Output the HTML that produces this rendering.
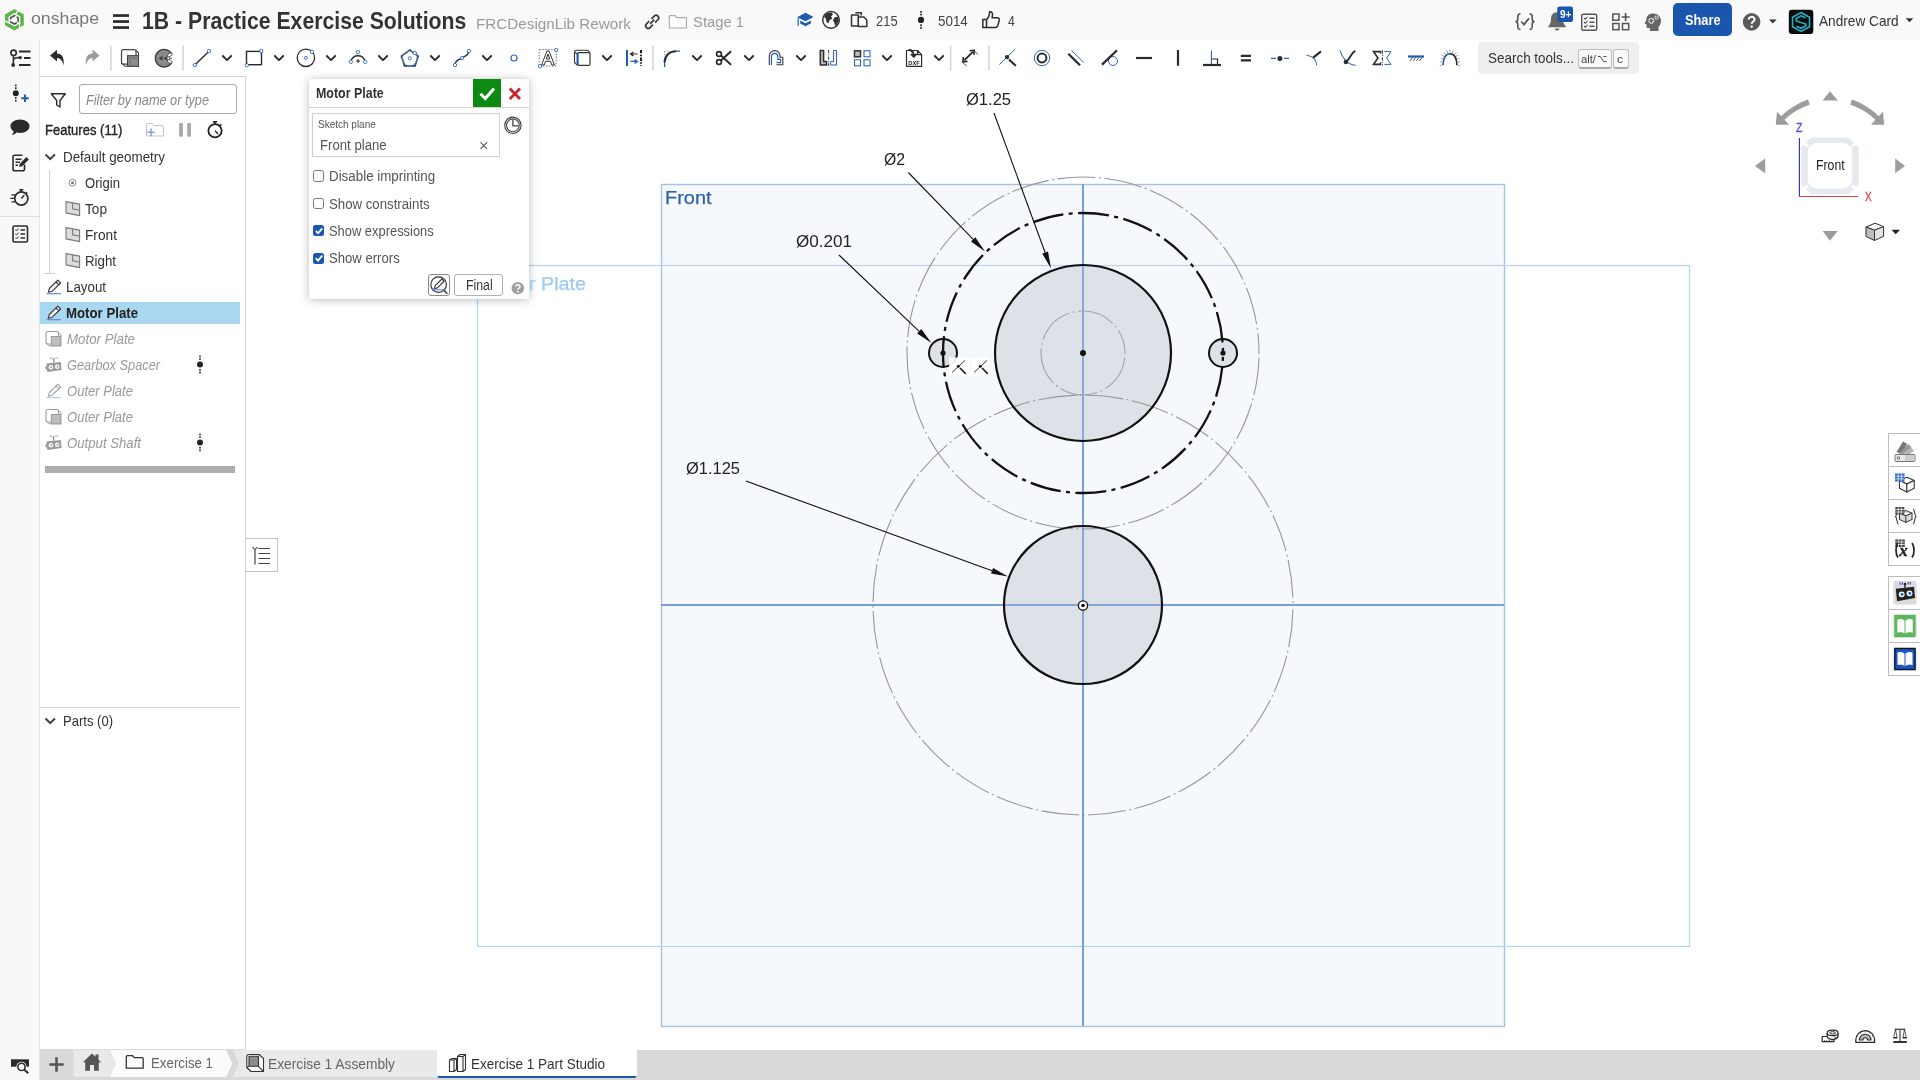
<!DOCTYPE html>
<html>
<head>
<meta charset="utf-8">
<title>1B - Practice Exercise Solutions</title>
<style>
html,body{margin:0;padding:0;}
body{width:1920px;height:1080px;overflow:hidden;position:relative;background:#fff;font-family:"Liberation Sans",sans-serif;}
.a{position:absolute;box-sizing:border-box;}
.t{position:absolute;white-space:pre;transform-origin:0 50%;font-family:"Liberation Sans",sans-serif;}
svg{position:absolute;overflow:visible;}
</style>
</head>
<body>
<!-- chrome backgrounds -->
<div class="a" style="left:0;top:0;width:1920px;height:40px;background:#f9f9f9;"></div>
<div class="a" style="left:0;top:40px;width:40px;height:1040px;background:#f8f8f8;border-right:1px solid #e4e4e4;"></div>
<div class="a" style="left:40px;top:76px;width:206px;height:1px;background:#d0d0d0;"></div>
<div class="a" style="left:0;top:216px;width:40px;height:1px;background:#dcdcdc;"></div>
<!-- feature panel -->
<div class="a" style="left:40px;top:77px;width:206px;height:973px;background:#fff;border-right:1px solid #d6d6d6;border-bottom:1px solid #dcdcdc;"></div>
<div class="a" style="left:79px;top:84px;width:158px;height:30px;border:1px solid #aaa;border-radius:3px;background:#fff;"></div>
<div class="a" style="left:40px;top:301.6px;width:200px;height:22.8px;background:#a9d7f2;"></div>
<div class="a" style="left:45px;top:466px;width:190px;height:7px;background:#adadad;"></div>
<div class="a" style="left:40px;top:707px;width:200px;height:1px;background:#d4d4d4;"></div>
<div class="a" style="left:49px;top:170px;width:1px;height:103px;background:#d0d0d0;"></div>
<div class="a" style="left:44px;top:273px;width:11px;height:1px;background:#d0d0d0;"></div>
<!-- panel toggle tab -->
<div class="a" style="left:246px;top:538px;width:32px;height:34px;background:#fff;border:1px solid #c4c4c4;border-left:none;"></div>
<!-- bottom bar -->
<div class="a" style="left:40px;top:1050px;width:1880px;height:30px;background:#d9d9d9;"></div>
<!-- search tools -->
<div class="a" style="left:1478px;top:42px;width:161px;height:32px;background:#efefef;border-radius:4px;"></div>
<div class="a" style="left:1578px;top:49px;width:34px;height:20px;border:1px solid #bdbdbd;border-bottom:2px solid #a9a9a9;border-radius:3px;background:#f8f8f8;"></div>
<div class="a" style="left:1612.5px;top:49px;width:16.5px;height:20px;border:1px solid #bdbdbd;border-bottom:2px solid #a9a9a9;border-radius:3px;background:#f8f8f8;"></div>
<!-- share -->
<div class="a" style="left:1672.8px;top:3px;width:59.2px;height:32.7px;background:#1a56ad;border-radius:5px;"></div>
<!-- sketch canvas -->
<svg width="1920" height="1080" viewBox="0 0 1920 1080" style="left:0;top:0;">
  <!-- Front plane -->
  <rect x="661.5" y="184.5" width="843" height="842" fill="#f6f9fb" stroke="#a6c1e8" stroke-width="1.4"/>
  <!-- Motor Plate plane -->
  <rect x="477.5" y="265.5" width="1212" height="681" fill="none" stroke="#b3d3ee" stroke-width="1.2"/>
  <!-- axes -->
  <line x1="1083" y1="184" x2="1083" y2="1026" stroke="#7a9fd6" stroke-width="2"/>
  <line x1="661" y1="605" x2="1504" y2="605" stroke="#7a9fd6" stroke-width="2"/>
  <!-- filled regions -->
  <circle cx="1083" cy="353" r="88" fill="#dde1e8"/>
  <circle cx="1083" cy="605" r="79" fill="#dde1e8"/>
  <circle cx="943" cy="353" r="14" fill="#dde1e8"/>
  <circle cx="1223" cy="353" r="14" fill="#dde1e8"/>
  <!-- axes over the fill, lighter -->
  <line x1="1083" y1="265" x2="1083" y2="441" stroke="#7a9fd6" stroke-width="2" opacity="0.85"/>
  <line x1="1083" y1="526" x2="1083" y2="684" stroke="#7a9fd6" stroke-width="2" opacity="0.85"/>
  <line x1="1004" y1="605" x2="1162" y2="605" stroke="#7a9fd6" stroke-width="2" opacity="0.85"/>
  <!-- thin construction circles -->
  <circle cx="1083" cy="353" r="176" fill="none" stroke="#979797" stroke-width="1.1" stroke-dasharray="38 3.5 2 3.5" stroke-dashoffset="42.5"/>
  <circle cx="1083" cy="353" r="42" fill="none" stroke="#a4a4a4" stroke-width="1.1" stroke-dasharray="38 3.5 2 3.5" stroke-dashoffset="42.5"/>
  <circle cx="1083" cy="605" r="210" fill="none" stroke="#979797" stroke-width="1.1" stroke-dasharray="38 3.5 2 3.5" stroke-dashoffset="42.5"/>
  <!-- bold construction circle -->
  <circle cx="1083" cy="353" r="140" fill="none" stroke="#111" stroke-width="2.3" stroke-dasharray="31 5.4 4 5.4" stroke-dashoffset="32.5"/>
  <!-- solid circles -->
  <circle cx="1083" cy="353" r="88" fill="none" stroke="#111" stroke-width="2.2"/>
  <circle cx="1083" cy="605" r="79" fill="none" stroke="#111" stroke-width="2.2"/>
  <circle cx="943" cy="353" r="14" fill="none" stroke="#111" stroke-width="2"/>
  <circle cx="1223" cy="353" r="14" fill="none" stroke="#111" stroke-width="2"/>
  <!-- points -->
  <circle cx="1083" cy="353" r="3" fill="#111"/>
  <circle cx="943" cy="353" r="2.6" fill="#111"/>
  <circle cx="1223" cy="353" r="2.6" fill="#111"/>
  <!-- origin -->
  <circle cx="1083" cy="605.5" r="4.6" fill="#fff" stroke="#111" stroke-width="1.3"/>
  <circle cx="1083" cy="605.5" r="1.8" fill="#111"/>
  <!-- leaders -->
  <line x1="994" y1="113" x2="1045.1" y2="252.5" stroke="#111" stroke-width="1.1"/><polygon points="1051.0,268.5 1042.3,253.6 1048.0,251.5" fill="#111"/>
  <line x1="908.3" y1="172.5" x2="973.2" y2="239.3" stroke="#111" stroke-width="1.1"/><polygon points="985.0,251.5 971.0,241.4 975.3,237.2" fill="#111"/>
  <line x1="839" y1="255" x2="919.2" y2="331.3" stroke="#111" stroke-width="1.1"/><polygon points="931.5,343.0 917.1,333.5 921.3,329.1" fill="#111"/>
  <line x1="746" y1="481" x2="992.0" y2="570.7" stroke="#111" stroke-width="1.1"/><polygon points="1008.0,576.5 991.0,573.5 993.1,567.9" fill="#111"/>
  <!-- constraint glyphs -->
  <rect x="949" y="357.5" width="20" height="18" fill="#fff" opacity="0.92"/>
  <rect x="971.5" y="357.5" width="18" height="18" fill="#fff" opacity="0.92"/>
  <g fill="none" stroke="#222">
    <path d="M952,372.5 L965,360.4" stroke-width="0.9"/>
    <path d="M960,368 L965.8,373.8" stroke-width="1.7"/>
    <path d="M974,372.5 L987,360.4" stroke-width="0.9"/>
    <path d="M982,368 L987.8,373.8" stroke-width="1.7"/>
  </g>
  <circle cx="958.3" cy="366.3" r="1.5" fill="#222"/>
  <circle cx="980.3" cy="366.3" r="1.5" fill="#222"/>
</svg>
<!-- dialog -->
<div class="a" style="left:309px;top:79.3px;width:220px;height:219.6px;background:#fff;box-shadow:0 1px 9px rgba(0,0,0,0.25),0 0 1px rgba(0,0,0,0.15);"></div>
<div class="a" style="left:309px;top:107px;width:220px;height:1px;background:#d4d4d4;"></div>
<div class="a" style="left:473px;top:79.3px;width:28.2px;height:27.7px;background:#0c8a12;"></div>
<div class="a" style="left:312px;top:113px;width:188px;height:44px;border:1px solid #cfcfcf;background:#fff;"></div>
<div class="a" style="left:313.3px;top:170.4px;width:11.2px;height:11.2px;border:1px solid #767676;border-radius:2.5px;background:#fff;"></div>
<div class="a" style="left:313.3px;top:197.5px;width:11.2px;height:11.2px;border:1px solid #767676;border-radius:2.5px;background:#fff;"></div>
<div class="a" style="left:313.3px;top:225.2px;width:11.2px;height:11.2px;border-radius:2.5px;background:#1a56ad;"></div>
<div class="a" style="left:313.3px;top:252.6px;width:11.2px;height:11.2px;border-radius:2.5px;background:#1a56ad;"></div>
<div class="a" style="left:428.2px;top:274.4px;width:21.8px;height:21.2px;border:1px solid #8a8a8a;border-radius:3px;background:#fff;"></div>
<div class="a" style="left:454px;top:274.4px;width:48.7px;height:21.2px;border:1px solid #b0b0b0;border-radius:3px;background:#fff;"></div>
<!-- right side panel -->
<div class="a" style="left:1888px;top:433px;width:33px;height:133px;border:1px solid #bdbdbd;background:#fff;"></div>
<div class="a" style="left:1888px;top:466px;width:33px;height:1px;background:#bdbdbd;"></div>
<div class="a" style="left:1888px;top:499px;width:33px;height:1px;background:#bdbdbd;"></div>
<div class="a" style="left:1888px;top:532px;width:33px;height:1px;background:#bdbdbd;"></div>
<div class="a" style="left:1888px;top:576px;width:33px;height:100px;border:1px solid #bdbdbd;background:#fff;"></div>
<div class="a" style="left:1888px;top:609px;width:33px;height:1px;background:#bdbdbd;"></div>
<div class="a" style="left:1888px;top:642px;width:33px;height:1px;background:#bdbdbd;"></div>
<!-- bottom tabs -->
<svg width="1920" height="1080" viewBox="0 0 1920 1080" style="left:0;top:0;">
  <path d="M73.5,1050 H109 L115,1063.5 L109,1077 H76.5 Q73.5,1077 73.5,1074 Z" fill="#e9e9e9"/>
  <path d="M109.5,1050 H226 L232.5,1063.5 L226,1077 H109.5 L115.5,1063.5 Z" fill="#fbfbfb"/>
  <path d="M232.8,1050 H437 V1077 H232.8 L238.8,1063.5 Z" fill="#e9e9e9"/>
  <path d="M437,1049.7 H637 V1075 Q637,1078 634,1078 H440 Q437,1078 437,1075 Z" fill="#fff"/>
  <path d="M437.5,1076 H636.5 V1076.3 Q636.5,1078 634.5,1078 H439.5 Q437.5,1078 437.5,1076.3 Z" fill="#1a56ad"/>
</svg>
<!-- ICONS -->
<svg width="1920" height="1080" viewBox="0 0 1920 1080" style="left:0;top:0;will-change:transform;">
<!-- ===== logo ===== -->
<g>
  <path d="M14.4,9 L23.8,14.4 L23.8,25.2 L14.4,30.6 L5,25.2 L5,14.4 Z" fill="#5cb548"/>
  <path d="M14.4,13 L20.3,16.4 L20.3,23.2 L14.4,26.6 L8.5,23.2 L8.5,16.4 Z" fill="#f8f8f8"/>
  <path d="M18.8,9.8 L15.4,14.3 M3.5,20.3 L9.5,23.2 M19.6,23 L19.6,29.5" stroke="#f8f8f8" stroke-width="1.3"/>
  <g fill="none" stroke="#484848" stroke-width="1.5" stroke-linejoin="miter">
    <path d="M10.7,19.4 V17.650 L14.4,15.5 L15.3,16"/>
    <path d="M16.6,16.8 L18.1,17.650 V22.2"/>
    <path d="M10.7,21.2 V21.950 L14.4,24.1 L16.8,22.7"/>
  </g>
</g>
<!-- hamburger -->
<g fill="#2a2a2a"><rect x="113" y="14.2" width="16" height="2.7"/><rect x="113" y="20.2" width="16" height="2.7"/><rect x="113" y="26.2" width="16" height="2.7"/></g>

<!-- ===== toolbar row ===== -->
<g stroke="#d0d0d0" stroke-width="1.4">
  <line x1="110.9" y1="45.5" x2="110.9" y2="70.5"/><line x1="183" y1="45.5" x2="183" y2="70.5"/>
  <line x1="653" y1="45.5" x2="653" y2="70.5"/><line x1="950.6" y1="45.5" x2="950.6" y2="70.5"/><line x1="989" y1="45.5" x2="989" y2="70.5"/>
</g>
<!-- chevrons -->
<path transform="translate(227,58)" d="M-4.2,-2 L0,2.1 L4.2,-2" fill="none" stroke="#2b2b2b" stroke-width="1.9" stroke-linecap="round" stroke-linejoin="round"/><path transform="translate(279,58)" d="M-4.2,-2 L0,2.1 L4.2,-2" fill="none" stroke="#2b2b2b" stroke-width="1.9" stroke-linecap="round" stroke-linejoin="round"/><path transform="translate(331,58)" d="M-4.2,-2 L0,2.1 L4.2,-2" fill="none" stroke="#2b2b2b" stroke-width="1.9" stroke-linecap="round" stroke-linejoin="round"/><path transform="translate(383,58)" d="M-4.2,-2 L0,2.1 L4.2,-2" fill="none" stroke="#2b2b2b" stroke-width="1.9" stroke-linecap="round" stroke-linejoin="round"/>
<path transform="translate(435,58)" d="M-4.2,-2 L0,2.1 L4.2,-2" fill="none" stroke="#2b2b2b" stroke-width="1.9" stroke-linecap="round" stroke-linejoin="round"/><path transform="translate(487,58)" d="M-4.2,-2 L0,2.1 L4.2,-2" fill="none" stroke="#2b2b2b" stroke-width="1.9" stroke-linecap="round" stroke-linejoin="round"/><path transform="translate(607,58)" d="M-4.2,-2 L0,2.1 L4.2,-2" fill="none" stroke="#2b2b2b" stroke-width="1.9" stroke-linecap="round" stroke-linejoin="round"/><path transform="translate(697,58)" d="M-4.2,-2 L0,2.1 L4.2,-2" fill="none" stroke="#2b2b2b" stroke-width="1.9" stroke-linecap="round" stroke-linejoin="round"/>
<path transform="translate(749,58)" d="M-4.2,-2 L0,2.1 L4.2,-2" fill="none" stroke="#2b2b2b" stroke-width="1.9" stroke-linecap="round" stroke-linejoin="round"/><path transform="translate(801,58)" d="M-4.2,-2 L0,2.1 L4.2,-2" fill="none" stroke="#2b2b2b" stroke-width="1.9" stroke-linecap="round" stroke-linejoin="round"/><path transform="translate(887,58)" d="M-4.2,-2 L0,2.1 L4.2,-2" fill="none" stroke="#2b2b2b" stroke-width="1.9" stroke-linecap="round" stroke-linejoin="round"/><path transform="translate(939,58)" d="M-4.2,-2 L0,2.1 L4.2,-2" fill="none" stroke="#2b2b2b" stroke-width="1.9" stroke-linecap="round" stroke-linejoin="round"/>
<!-- tree icon (left strip top) -->
<g stroke="#2b2b2b" fill="none" stroke-width="2">
  <circle cx="13.6" cy="52.8" r="2.7" stroke-width="1.6"/>
  <path d="M13.4,55.5 V63.5 M13.4,60 C13.4,57.5 16,58 19.5,57.6" stroke-width="1.6"/>
  <circle cx="13.2" cy="65" r="1.9" fill="#2b2b2b" stroke="none"/>
  <circle cx="20.2" cy="57.6" r="1.7" fill="#2b2b2b" stroke="none"/>
  <path d="M19,51.5 H30.5 M24,58 H30.5 M19,65 H30.5"/>
</g>
<!-- undo / redo -->
<path d="M50,55.5 L57,49.8 V53.4 C62,53.4 64.5,57.5 63.5,65.5 C62.5,60.5 60.5,58.2 57,58 V61.5 Z" fill="#2b2b2b"/>
<path d="M99.5,55.5 L92.5,49.8 V53.4 C87.5,53.4 85,57.5 86,65.5 C87,60.5 89,58.2 92.5,58 V61.5 Z" fill="#9c9c9c"/>
<!-- sketch/extrude box icon -->
<g>
  <rect x="121.5" y="49.7" width="14.5" height="14.5" rx="2" fill="#fff" stroke="#444" stroke-width="1.2"/>
  <path d="M136,50.5 L138.5,53 V66.3 H125 L122.3,63.6" fill="none" stroke="#444" stroke-width="1.1"/>
  <rect x="127.5" y="55.6" width="11" height="10.7" fill="#8c8c8c" stroke="#444" stroke-width="1"/>
  <path d="M127.5,55.6 L130,58 H138.5 M130,58 V66.3" stroke="#6a6a6a" stroke-width="1" fill="none"/>
</g>
<!-- pacman-like icon -->
<g transform="translate(164,58.2)">
  <path d="M7.7,-4.5 A8.8,8.8 0 1 0 7.7,4.5 L1,0 Z" fill="#8a8a8a" stroke="#3a3a3a" stroke-width="1.3" stroke-linejoin="round"/>
  <ellipse cx="5.8" cy="-3.3" rx="2.6" ry="1.5" transform="rotate(-35 5.8 -3.3)" fill="#fff" stroke="#3a3a3a" stroke-width="0.8"/>
  <ellipse cx="5.8" cy="3.3" rx="2.6" ry="1.5" transform="rotate(35 5.8 3.3)" fill="#fff" stroke="#3a3a3a" stroke-width="0.8"/>
  <path d="M-3.5,0 H8.5" stroke="#222" stroke-width="0.9" stroke-dasharray="3 1.2"/>
  <path d="M-4.5,0 L-1.5,-2 M-4.5,0 L-1.5,2" stroke="#222" stroke-width="0.9"/>
</g>
<!-- line tool -->
<line x1="195.8" y1="64" x2="208" y2="52.2" stroke="#2b2b2b" stroke-width="1.4"/>
<circle cx="194.8" cy="65" r="1.7" fill="#fff" stroke="#2e67b8" stroke-width="0.9"/><circle cx="209" cy="51.2" r="1.7" fill="#fff" stroke="#2e67b8" stroke-width="0.9"/>
<!-- rect tool -->
<rect x="246.5" y="51.4" width="15" height="13.3" fill="none" stroke="#2b2b2b" stroke-width="1.4"/>
<circle cx="261.3" cy="51" r="1.7" fill="#fff" stroke="#2e67b8" stroke-width="0.9"/><circle cx="246.8" cy="65.2" r="1.7" fill="#fff" stroke="#2e67b8" stroke-width="0.9"/>
<!-- circle tool -->
<circle cx="305.9" cy="57.8" r="8.7" fill="none" stroke="#2b2b2b" stroke-width="1.3"/>
<circle cx="305.9" cy="57.8" r="1.5" fill="#fff" stroke="#2e67b8" stroke-width="0.9"/><circle cx="312" cy="51.8" r="1.7" fill="#fff" stroke="#2e67b8" stroke-width="0.9"/>
<!-- arc tool -->
<path d="M351,61 A7.3,7.3 0 0 1 365,61" fill="none" stroke="#2b2b2b" stroke-width="1.3"/>
<path d="M356,61 H360 M358,59 V63" stroke="#2b2b2b" stroke-width="1"/>
<circle cx="350.8" cy="61.8" r="1.7" fill="#fff" stroke="#2e67b8" stroke-width="0.9"/><circle cx="365.2" cy="61.8" r="1.7" fill="#fff" stroke="#2e67b8" stroke-width="0.9"/><circle cx="358" cy="52.2" r="1.7" fill="#fff" stroke="#2e67b8" stroke-width="0.9"/>
<!-- polygon tool -->
<g transform="translate(409.8,58.8)">
  <path d="M0,-8.8 L8.4,-2.7 L5.2,7.1 L-5.2,7.1 L-8.4,-2.7 Z" fill="none" stroke="#27406e" stroke-width="1.7" stroke-linejoin="round"/>
  <circle cx="0" cy="-0.5" r="7.3" fill="none" stroke="#8fa6cf" stroke-width="0.7"/>
  <circle cx="0" cy="-0.5" r="1.6" fill="#fff" stroke="#2e67b8" stroke-width="0.9"/>
  <circle cx="5" cy="-5.8" r="1.7" fill="#fff" stroke="#2e67b8" stroke-width="0.9"/>
</g>
<!-- spline -->
<path d="M455,64.8 C456,58 460,60.5 462,58 C464,55.5 468,57 468.8,51.4" fill="none" stroke="#2b2b2b" stroke-width="1.3"/>
<circle cx="455" cy="65" r="1.7" fill="#fff" stroke="#2e67b8" stroke-width="0.9"/><circle cx="462" cy="58" r="1.6" fill="#fff" stroke="#2e67b8" stroke-width="0.9"/><circle cx="468.9" cy="51" r="1.7" fill="#fff" stroke="#2e67b8" stroke-width="0.9"/>
<!-- point -->
<circle cx="514" cy="58" r="3" fill="none" stroke="#2e67b8" stroke-width="1.2"/>
<!-- text tool -->
<rect x="539.2" y="49.6" width="17" height="16.4" fill="none" stroke="#555" stroke-width="0.8" stroke-dasharray="1.6 1.4"/>
<path d="M541.5,65 L547,51 H549 L554.5,65 H551.8 L550.5,61.3 H545.5 L544.2,65 Z M546.3,59 H549.7 L548,54 Z" fill="#fff" stroke="#333" stroke-width="1" stroke-linejoin="round"/>
<circle cx="556.2" cy="50" r="1.7" fill="#fff" stroke="#2e67b8" stroke-width="0.9"/><circle cx="540" cy="66.2" r="1.7" fill="#fff" stroke="#2e67b8" stroke-width="0.9"/>
<!-- use/project box -->
<path d="M574.5,52 L577.5,54 M574.5,52 Q574.5,50.3 576.5,50.3 H586.5 Q588.3,50.3 590,52.5 M574.5,52 V62.5 L577.5,65.3" fill="none" stroke="#333" stroke-width="1.1"/>
<rect x="577.5" y="52.6" width="12.5" height="12.8" rx="1.5" fill="#fff" stroke="#333" stroke-width="1.2"/>
<line x1="577.6" y1="53.5" x2="577.6" y2="64.8" stroke="#1f5bb0" stroke-width="2"/>
<!-- offset-dimension icon -->
<line x1="627" y1="50" x2="627" y2="66" stroke="#1f5bb0" stroke-width="2"/>
<line x1="641" y1="50" x2="641" y2="66" stroke="#222" stroke-width="2" stroke-dasharray="3.3 1.4 1.5 1.4"/>
<path d="M631,54 H637.5 M633.5,52 L630.5,54 L633.5,56" fill="none" stroke="#222" stroke-width="1.2"/>
<path d="M630.5,61.4 H637 M634.5,59.4 L637.5,61.4 L634.5,63.4" fill="none" stroke="#1f5bb0" stroke-width="1.2"/>
<!-- fillet -->
<path d="M664.5,51.3 H670 M664.5,51.3 V56" stroke="#888" stroke-width="0.8" stroke-dasharray="1.3 1.2" fill="none"/>
<path d="M664.6,62.5 C664.6,56 669,51.3 676,51.2" fill="none" stroke="#2b2b2b" stroke-width="2"/>
<path d="M664.6,62 V67 M675.5,51.2 H680" stroke="#1f5bb0" stroke-width="1.3"/>
<!-- trim scissors -->
<g stroke="#2b2b2b" fill="none" stroke-width="2" stroke-linecap="round">
  <path d="M721.5,56 L730.5,64.3 M721.5,60 L730.5,51.7"/>
  <circle cx="719" cy="54" r="2.4" stroke-width="1.7"/><circle cx="719" cy="62" r="2.4" stroke-width="1.7"/>
</g>
<!-- offset -->
<path d="M769.3,65 V56 A5.3,5.3 0 0 1 780,56 V57.2 H782.8 V64.8 H776.5" fill="none" stroke="#333" stroke-width="1.1"/>
<path d="M771.5,65 V56 A3.2,3.2 0 0 1 777.8,56 V59.4 H780.6 V62.6 H776.5" fill="none" stroke="#1f5bb0" stroke-width="1.1"/>
<!-- mirror -->
<path d="M820.3,50.5 H823.6 V61.6 H826.6 V65 H820.3 Z" fill="#bbb" stroke="#2b2b2b" stroke-width="1.5" stroke-linejoin="round"/>
<line x1="828.6" y1="50" x2="828.6" y2="66" stroke="#333" stroke-width="1" stroke-dasharray="3 1.3 1 1.3"/>
<path d="M836.6,50.5 H833.6 V61.6 H830.6 V65 H836.6 Z" fill="none" stroke="#1f5bb0" stroke-width="1"/>
<!-- pattern -->
<rect x="854.5" y="50.8" width="6" height="6" fill="#bbb" stroke="#333" stroke-width="1.5"/>
<rect x="864" y="50.8" width="6" height="6" fill="none" stroke="#1f5bb0" stroke-width="1"/>
<rect x="854.5" y="59.8" width="6" height="6" fill="none" stroke="#1f5bb0" stroke-width="1"/>
<rect x="864" y="59.8" width="6" height="6" fill="none" stroke="#1f5bb0" stroke-width="1"/>
<!-- DXF -->
<path d="M906.5,50.5 H917.5 L921.6,54.6 V66.3 H906.5 Z M917.5,50.5 V54.6 H921.6" fill="#fff" stroke="#2b2b2b" stroke-width="1.2" stroke-linejoin="round"/>
<path d="M908.5,49.6 C912,49.6 913.8,51.5 913.8,54.8 M911,54.3 L913.8,57.3 L916.6,54.3 Z" fill="#2b2b2b" stroke="#2b2b2b" stroke-width="1.2" stroke-linejoin="round"/>
<text x="914" y="65" font-family="Liberation Sans, sans-serif" font-size="5.8" font-weight="700" fill="#222" text-anchor="middle" textLength="11.5" lengthAdjust="spacingAndGlyphs">DXF</text>
<!-- dimension -->
<g stroke="#222" fill="none">
  <path d="M964.5,60.2 L972.8,51.9" stroke-width="1.8"/>
  <path d="M963.3,57.2 L963,61.8 L967.5,61.4 M969.7,50.7 L974.2,50.3 L973.9,54.9" stroke-width="1.6" stroke-linejoin="miter"/>
  <path d="M962,62 L966.5,66 M973.5,50.2 L977.8,54.5" stroke-width="0.8"/>
</g>
<!-- coincident -->
<line x1="999.4" y1="64.5" x2="1015" y2="49.3" stroke="#2e67b8" stroke-width="1"/>
<line x1="1009" y1="59.5" x2="1015.8" y2="65.8" stroke="#2b2b2b" stroke-width="2.2"/>
<circle cx="1007" cy="57.1" r="2.2" fill="#2b2b2b"/>
<!-- concentric -->
<circle cx="1042" cy="58" r="7.7" fill="none" stroke="#2e67b8" stroke-width="1"/><circle cx="1042" cy="58" r="4.4" fill="none" stroke="#2b2b2b" stroke-width="2"/>
<!-- parallel -->
<line x1="1068.3" y1="53.8" x2="1080" y2="65.3" stroke="#2b2b2b" stroke-width="2.2"/><line x1="1071.5" y1="50.5" x2="1083.7" y2="62.4" stroke="#2e67b8" stroke-width="1"/>
<!-- tangent -->
<circle cx="1113" cy="61" r="4.5" fill="none" stroke="#2e67b8" stroke-width="1"/><line x1="1102" y1="64.6" x2="1117" y2="50.2" stroke="#2b2b2b" stroke-width="2.2"/>
<!-- horizontal / vertical -->
<line x1="1136" y1="58" x2="1152" y2="58" stroke="#2b2b2b" stroke-width="2.2"/><line x1="1178" y1="50" x2="1178" y2="65.8" stroke="#2b2b2b" stroke-width="2.2"/>
<!-- perpendicular -->
<line x1="1211.4" y1="50.4" x2="1211.4" y2="65" stroke="#2e67b8" stroke-width="1.1"/>
<path d="M1211.4,59 H1217.5 V65" fill="none" stroke="#2b2b2b" stroke-width="1.2"/>
<line x1="1203" y1="65" x2="1221" y2="65" stroke="#2b2b2b" stroke-width="2.2"/>
<!-- equal -->
<path d="M1240.8,55.8 H1251 M1240.8,60.3 H1251" stroke="#2b2b2b" stroke-width="2.2"/>
<!-- midpoint -->
<path d="M1271,58.4 H1276 M1284,58.4 H1289" stroke="#2e67b8" stroke-width="1.1"/><circle cx="1279.9" cy="58.4" r="2.5" fill="#2b2b2b"/>
<!-- normal -->
<path d="M1306.5,55.2 C1313,56 1316.5,60 1316.7,65.3" fill="none" stroke="#2e67b8" stroke-width="1.1"/><line x1="1313.2" y1="57.7" x2="1321" y2="51.4" stroke="#2b2b2b" stroke-width="2.2"/>
<!-- pierce -->
<path d="M1340,50.4 C1342,58 1348,65 1355.8,65.3" fill="none" stroke="#2e67b8" stroke-width="1.1"/>
<path d="M1346,61.8 C1350.5,59 1350.5,53 1355.3,50.8" fill="none" stroke="#2b2b2b" stroke-width="2"/><circle cx="1345.9" cy="62" r="2.3" fill="#2b2b2b"/>
<!-- symmetric -->
<path d="M1380.5,53.5 V51.6 H1373.5 L1378,58 L1373.5,64.4 H1380.5 V62.5" fill="none" stroke="#2b2b2b" stroke-width="1.6" stroke-linejoin="miter"/>
<line x1="1382.4" y1="50.4" x2="1382.4" y2="65.6" stroke="#222" stroke-width="0.9" stroke-dasharray="3.5 1.2 1 1.2"/>
<path d="M1384.3,51.6 H1391 L1386.7,58 L1391,64.4 H1384.3" fill="none" stroke="#2e67b8" stroke-width="1"/>
<!-- fix -->
<line x1="1408" y1="56.5" x2="1424" y2="56.5" stroke="#1f5bb0" stroke-width="2.2"/>
<path d="M1410,60.8 L1412.5,57.5 M1413.2,60.8 L1415.7,57.5 M1416.4,60.8 L1418.9,57.5 M1419.6,60.8 L1422.1,57.5" stroke="#333" stroke-width="0.9"/>
<!-- curvature -->
<path d="M1443.1,65.3 C1443.4,57 1446.5,53.7 1450,53.7" fill="none" stroke="#1f5bb0" stroke-width="1.6"/>
<path d="M1450,53.7 C1453.5,53.7 1456.6,57 1456.9,65.3" fill="none" stroke="#2b2b2b" stroke-width="1.6"/>
<path d="M1442.0,65.3 L1439.8,65.3 M1442.2,62.1 L1440.1,61.8 M1443.0,59.1 L1440.9,58.4 M1444.2,56.5 L1441.6,55.0 M1445.8,54.5 L1443.7,52.3 M1447.8,53.1 L1446.5,50.4 M1450.0,52.6 L1450.0,49.6 M1452.2,53.1 L1453.5,50.4 M1454.2,54.5 L1456.3,52.3 M1455.8,56.5 L1458.4,55.0 M1457.0,59.1 L1459.1,58.4 M1457.8,62.1 L1459.9,61.8 M1458.0,65.3 L1460.2,65.3" stroke="#666" stroke-width="0.65" fill="none"/>

<!-- ===== top bar icons ===== -->
<!-- link -->
<g transform="translate(652.2,21.8) rotate(-45)" fill="none" stroke="#3a3a3a" stroke-width="1.7">
  <path d="M-1.5,-2.6 H-5.5 A2.6,2.6 0 0 0 -5.5,2.6 H-1.5 M1.5,-2.6 H5.5 A2.6,2.6 0 0 1 5.5,2.6 H1.5 M-3,0 H3"/>
</g>
<!-- folder -->
<path d="M669.3,28 V16.5 Q669.3,15.6 670.2,15.6 H675 L676.8,17.6 H685.6 Q686.5,17.6 686.5,18.5 V28 Z" fill="#fdfdfd" stroke="#a8a8a8" stroke-width="1.1"/>
<!-- grad cap -->
<g fill="#1f5bb0">
  <path d="M797,17.3 L805.5,12.8 L813.5,17 L805.5,21.3 Z"/>
  <path d="M800.3,20.5 L805.5,23.2 L810.8,20.4 V23.8 C808.5,24.5 806.5,25.5 805.5,26.5 C804.5,25.5 802.5,24.5 800.3,23.8 Z"/>
  <path d="M797.6,18.2 H798.8 V25.8 H797.6 Z"/>
</g>
<!-- globe -->
<circle cx="831" cy="19.9" r="8.3" fill="#fff" stroke="#333" stroke-width="1.5"/>
<path d="M825.5,14.5 C827,13 829.5,12.3 831.5,12.5 L833,14.5 L831,16.5 L832.5,18.5 L829.5,20.3 L828.5,23.5 L826.5,22 L825.8,18.5 L824,17 Z M834.5,17.5 L838,16.5 L838.8,20.5 L837,24.5 L835,26 L834.3,22.5 L832.8,20.5 Z" fill="#333"/>
<!-- copy / pages -->
<g fill="#f8f8f8" stroke="#333" stroke-width="1.5" stroke-linejoin="round">
  <path d="M851.5,15 H858.5 V26 H851.5 Z"/>
  <path d="M855.3,12.8 H861.3 V15.5"/>
  <path d="M858.3,17 H863.8 L866.8,20 V26.5 H858.3 Z"/>
</g>
<!-- version graph icon -->
<g fill="#222"><circle cx="921" cy="19.9" r="3.1"/><rect x="920.2" y="11" width="1.7" height="1.7"/><rect x="920.2" y="13.7" width="1.7" height="1.7"/><rect x="920.2" y="24.4" width="1.7" height="1.7"/><rect x="920.2" y="27.1" width="1.7" height="1.7"/></g>
<!-- thumbs up -->
<path d="M982.8,19.5 H986.5 V27.6 H982.8 Z M986.5,19.8 C988.5,18 989.5,15 989.6,11.8 C991.5,11.3 992.8,12.8 992.5,15 L992,17.8 H997.3 C999,17.8 999.6,19.3 999.2,20.6 L997.6,26 C997.2,27.2 996.4,27.6 995.3,27.6 H986.5" fill="none" stroke="#2b2b2b" stroke-width="1.5" stroke-linejoin="round"/>
<!-- {check} -->
<g fill="none" stroke="#555" stroke-width="1.6">
  <path d="M1520.5,13.8 C1518,13.8 1517.8,15 1517.8,17 V19 C1517.8,20.6 1517,21.5 1515.5,21.6 C1517,21.7 1517.8,22.6 1517.8,24.2 V26.5 C1517.8,28.5 1518,29.5 1520.5,29.5"/>
  <path d="M1529.5,13.8 C1532,13.8 1532.2,15 1532.2,17 V19 C1532.2,20.6 1533,21.5 1534.5,21.6 C1533,21.7 1532.2,22.6 1532.2,24.2 V26.5 C1532.2,28.5 1532,29.5 1529.5,29.5"/>
  <path d="M1521.3,21.5 L1524,24.5 L1529,18.3" stroke-width="1.8"/>
</g>
<!-- bell -->
<path d="M1557,12.3 C1561,12.3 1563,15.3 1563,18.5 C1563,23 1564.3,24.8 1565.8,26.3 V27.3 H1548.4 V26.3 C1549.8,24.8 1551,23 1551,18.5 C1551,15.3 1553,12.3 1557,12.3 Z M1554.8,28.5 H1559.3 C1559.3,31.3 1554.8,31.3 1554.8,28.5 Z" fill="#666"/>
<rect x="1557.3" y="6.5" width="15.7" height="15.5" rx="2" fill="#1a56ad"/>
<!-- checklist -->
<g fill="none" stroke="#555" stroke-width="1.4">
  <rect x="1581.7" y="14.2" width="15" height="16" rx="1.5"/>
  <path d="M1589.5,18.2 H1594.5 M1589.5,22.2 H1594.5 M1589.5,26.2 H1594.5" stroke-width="1.5"/>
  <path d="M1584,18 L1585.3,19.3 L1587.5,16.8 M1584,22 L1585.3,23.3 L1587.5,20.8 M1584,26 L1585.3,27.3 L1587.5,24.8" stroke-width="1.1"/>
</g>
<!-- apps + -->
<g fill="none" stroke="#555" stroke-width="1.5">
  <rect x="1612.8" y="14" width="6.2" height="6.2"/><rect x="1612.8" y="23.5" width="6.2" height="6.2"/><rect x="1622.5" y="23.5" width="6.2" height="6.2"/>
  <path d="M1625.6,13 V21 M1621.6,17 H1629.6" stroke-width="1.7"/>
</g>
<!-- head with gears -->
<path d="M1653,13.6 C1658,13.6 1661,17 1661,21 C1661,24 1659.5,26 1658.5,27 V31 H1650 V28 H1648 C1647,28 1646.5,27.5 1646.5,26.5 V24.3 L1645,23.8 C1644.6,23.6 1644.6,23.2 1644.8,22.8 L1646.3,20.2 C1646.3,16 1649,13.6 1653,13.6 Z" fill="#666"/>
<circle cx="1651.3" cy="20.8" r="2.3" fill="none" stroke="#f8f8f8" stroke-width="1.5" stroke-dasharray="1.2 0.6"/>
<circle cx="1656.5" cy="17.6" r="1.6" fill="none" stroke="#f8f8f8" stroke-width="1.2" stroke-dasharray="0.9 0.5"/>
<!-- help -->
<circle cx="1751.6" cy="21.9" r="8.8" fill="#5a5a5a"/>
<path d="M1748.8,19.6 C1748.8,16 1754.6,16 1754.6,19.4 C1754.6,21.4 1751.7,21.6 1751.7,23.8" fill="none" stroke="#fff" stroke-width="2"/><circle cx="1751.7" cy="26.6" r="1.2" fill="#fff"/>
<path d="M1769,19.6 H1776.6 L1772.8,23.6 Z" fill="#333"/>
<!-- avatar -->
<rect x="1788.8" y="9.8" width="24.5" height="24.1" rx="3" fill="#0b0b0b"/>
<g fill="none" stroke="#1fb6c9" stroke-width="1.5" stroke-linejoin="miter">
  <path d="M1801,12.5 L1809.5,17.3 V26.7 L1801,31.5 L1792.5,26.7 V17.3 Z"/>
  <path d="M1805.5,17.8 L1801,15.8 L1796.3,18.5 V21 L1805.7,24 V26 L1801,28.3 L1796.5,26.2" stroke-width="1.6"/>
</g>
<path d="M1905.7,18.2 H1913.3 L1909.5,22.2 Z" fill="#333"/>
<!-- search keys: option glyph -->
<path d="M1598,56.5 H1600.3 L1603.5,61.5 H1606.5 M1603.3,56.5 H1606.5" fill="none" stroke="#444" stroke-width="0.9"/>
<!-- ===== left strip ===== -->
<g fill="#222"><circle cx="15.8" cy="93.3" r="3"/><rect x="15" y="84.6" width="1.6" height="1.7"/><rect x="15" y="87.3" width="1.6" height="1.7"/><rect x="15" y="97.2" width="1.6" height="1.7"/><rect x="15" y="99.9" width="1.6" height="1.7"/></g>
<path d="M21.3,98.3 H28.7 M25,94.6 V102" stroke="#1f5bb0" stroke-width="1.9"/>
<path d="M20,119.6 C25.5,119.6 29.5,122.6 29.5,126.3 C29.5,130 25.5,133 20,133 C18.8,133 17.7,132.9 16.7,132.6 C15.5,134 13.5,135 11.5,135.3 C12.8,134.2 13.5,132.8 13.5,131.3 C11.7,130.1 10.5,128.3 10.5,126.3 C10.5,122.6 14.5,119.6 20,119.6 Z" fill="#2b2b2b"/>
<g fill="none" stroke="#2b2b2b" stroke-width="1.6"><path d="M24.5,164.5 V169 Q24.5,170.8 22.7,170.8 H14.8 Q13,170.8 13,169 V157 Q13,155.2 14.8,155.2 H22.5"/><path d="M15.5,159.3 H21.5 M15.5,162.3 H20 M15.5,165.3 H18" stroke-width="1.4"/><path d="M19.5,166.5 L20.3,163.7 L26.3,157.5 L28.4,159.5 L22.3,165.7 Z" fill="#2b2b2b" stroke-width="0.8"/></g>
<g fill="none" stroke="#2b2b2b" stroke-width="1.7"><circle cx="21.3" cy="198.5" r="6.6"/><path d="M19.3,189.8 H23.3 M21.3,190 V192 M26,192.2 L27.3,193.5" stroke-width="1.6"/><path d="M21.3,198.5 L24.3,195.2" stroke-width="1.5"/><path d="M11.5,194.8 H15.5 M10.3,198.3 H14 M11.5,201.8 H15.5" stroke-width="1.2"/></g>
<g fill="none" stroke="#2b2b2b" stroke-width="1.6"><rect x="13" y="226" width="14.5" height="16" rx="1.6"/><path d="M20.5,230 H25 M20.5,234 H25 M20.5,238 H25" stroke-width="1.5"/><path d="M15.3,229.8 L16.5,231 L18.6,228.6 M15.3,233.8 L16.5,235 L18.6,232.6 M15.3,237.8 L16.5,239 L18.6,236.6" stroke-width="1"/></g>
<!-- ===== feature panel ===== -->
<path d="M51.3,93.8 H65.3 L60,100.5 V107 L56.7,105 V100.5 Z" fill="none" stroke="#2b2b2b" stroke-width="1.4" stroke-linejoin="round"/>
<path d="M146.5,136 V124.5 Q146.5,123.6 147.4,123.6 H152.5 L154.3,125.6 H162.6 Q163.5,125.6 163.5,126.5 V136 Z" fill="#fff" stroke="#c4c4c4" stroke-width="1"/>
<path d="M147.3,132.3 H154.7 M151,128.6 V136" stroke="#8a9fe0" stroke-width="1.5"/>
<rect x="179.1" y="123.1" width="3.8" height="13.5" fill="#a9a9a9"/><rect x="187.2" y="123.1" width="3.8" height="13.5" fill="#a9a9a9"/>
<g fill="none" stroke="#222" stroke-width="1.8"><circle cx="215" cy="130.8" r="6.6"/><path d="M212.8,121.8 H217.2 M215,122 V124 M220,124.3 L221.3,125.6" stroke-width="1.6"/><path d="M215,130.8 L218,134" stroke-width="1.4"/></g>
<path d="M45.5,154.5 L50.2,159 L55,154.5" fill="none" stroke="#444" stroke-width="2"/>
<path d="M45.5,718.5 L50.2,723 L55,718.5" fill="none" stroke="#444" stroke-width="2"/>
<circle cx="72.5" cy="182.7" r="3.4" fill="#fff" stroke="#888" stroke-width="1"/><circle cx="72.5" cy="182.7" r="1.5" fill="#777"/>
<g transform="translate(0,201.3)"><path d="M66,0.3 L79.6,2.8 V14.3 L66,11.6 Z" fill="#dcdcdc" stroke="#7a7a7a" stroke-width="1.1" stroke-linejoin="round"/><path d="M72.6,1.6 V7.5 L79.6,9" fill="none" stroke="#7a7a7a" stroke-width="1.1"/></g><g transform="translate(0,227.3)"><path d="M66,0.3 L79.6,2.8 V14.3 L66,11.6 Z" fill="#dcdcdc" stroke="#7a7a7a" stroke-width="1.1" stroke-linejoin="round"/><path d="M72.6,1.6 V7.5 L79.6,9" fill="none" stroke="#7a7a7a" stroke-width="1.1"/></g><g transform="translate(0,253.3)"><path d="M66,0.3 L79.6,2.8 V14.3 L66,11.6 Z" fill="#dcdcdc" stroke="#7a7a7a" stroke-width="1.1" stroke-linejoin="round"/><path d="M72.6,1.6 V7.5 L79.6,9" fill="none" stroke="#7a7a7a" stroke-width="1.1"/></g><g transform="translate(0,280.2)" opacity="1"><path d="M48.3,12 L49.4,8.3 L57.8,0 L60.6,2.8 L52.2,11 Z M56,1.8 L58.8,4.6" fill="#fff" stroke="#333" stroke-width="1.1" stroke-linejoin="round"/><path d="M46.5,13.5 H61" stroke="#5b7fd0" stroke-width="1.1"/></g><g transform="translate(0,306.2)" opacity="1"><path d="M48.3,12 L49.4,8.3 L57.8,0 L60.6,2.8 L52.2,11 Z M56,1.8 L58.8,4.6" fill="#fff" stroke="#333" stroke-width="1.1" stroke-linejoin="round"/><path d="M46.5,13.5 H61" stroke="#5b7fd0" stroke-width="1.1"/></g><g transform="translate(0,331)"><rect x="46" y="0.5" width="12.5" height="12.5" rx="1.8" fill="#fff" stroke="#9a9a9a" stroke-width="1.1"/><path d="M58.5,1.5 L60.8,3.5 V14.8 H49 L46.8,12.6" fill="none" stroke="#9a9a9a" stroke-width="1"/><rect x="51.3" y="5.5" width="9.5" height="9.3" fill="#bdbdbd" stroke="#9a9a9a" stroke-width="1"/></g><g transform="translate(0,356.5)" fill="#9a9a9a"><path d="M46.5,7 L60.8,5.6 L61.6,13.6 L47.3,15.6 Z"/><path d="M45.6,9.5 h1.5 v3.5 h-1.5 z"/><path d="M53,3.2 h1.3 v3 h-1.3 z"/><circle cx="53.6" cy="2.6" r="1.1"/><path d="M49.5,0.6 h1 v2.2 h-1z M51.2,0.6 h1 v2.2 h-1z M55.5,0.4 h1 v2.2 h-1z M57.2,0.4 h1 v2.2 h-1z" opacity="0.7"/><circle cx="51" cy="10.8" r="2.3" fill="#fff"/><circle cx="57.3" cy="10.2" r="2.3" fill="#fff"/><circle cx="51.3" cy="10.8" r="1" /><circle cx="57.6" cy="10.2" r="1"/></g><g transform="translate(0,384.2)" opacity="0.45"><path d="M48.3,12 L49.4,8.3 L57.8,0 L60.6,2.8 L52.2,11 Z M56,1.8 L58.8,4.6" fill="#fff" stroke="#333" stroke-width="1.1" stroke-linejoin="round"/><path d="M46.5,13.5 H61" stroke="#5b7fd0" stroke-width="1.1"/></g><g transform="translate(0,409)"><rect x="46" y="0.5" width="12.5" height="12.5" rx="1.8" fill="#fff" stroke="#9a9a9a" stroke-width="1.1"/><path d="M58.5,1.5 L60.8,3.5 V14.8 H49 L46.8,12.6" fill="none" stroke="#9a9a9a" stroke-width="1"/><rect x="51.3" y="5.5" width="9.5" height="9.3" fill="#bdbdbd" stroke="#9a9a9a" stroke-width="1"/></g><g transform="translate(0,434.5)" fill="#9a9a9a"><path d="M46.5,7 L60.8,5.6 L61.6,13.6 L47.3,15.6 Z"/><path d="M45.6,9.5 h1.5 v3.5 h-1.5 z"/><path d="M53,3.2 h1.3 v3 h-1.3 z"/><circle cx="53.6" cy="2.6" r="1.1"/><path d="M49.5,0.6 h1 v2.2 h-1z M51.2,0.6 h1 v2.2 h-1z M55.5,0.4 h1 v2.2 h-1z M57.2,0.4 h1 v2.2 h-1z" opacity="0.7"/><circle cx="51" cy="10.8" r="2.3" fill="#fff"/><circle cx="57.3" cy="10.2" r="2.3" fill="#fff"/><circle cx="51.3" cy="10.8" r="1" /><circle cx="57.6" cy="10.2" r="1"/></g><g transform="translate(200,364.4)" fill="#222"><circle cx="0" cy="0" r="3"/><rect x="-0.8" y="-8.8" width="1.6" height="1.6"/><rect x="-0.8" y="-6.2" width="1.6" height="1.6"/><rect x="-0.8" y="4.6" width="1.6" height="1.6"/><rect x="-0.8" y="7.2" width="1.6" height="1.6"/></g><g transform="translate(200,442.4)" fill="#222"><circle cx="0" cy="0" r="3"/><rect x="-0.8" y="-8.8" width="1.6" height="1.6"/><rect x="-0.8" y="-6.2" width="1.6" height="1.6"/><rect x="-0.8" y="4.6" width="1.6" height="1.6"/><rect x="-0.8" y="7.2" width="1.6" height="1.6"/></g>
<!-- panel toggle icon -->
<g stroke="#444" fill="none"><path d="M258.5,548.5 H270 M258.5,553.5 H270 M258.5,558.5 H270 M258.5,563.5 H270" stroke-width="1"/><path d="M255,550 V564.5" stroke-width="1.2"/><path d="M252.5,547.2 L255,549.6 L257.5,547.2" stroke-width="1.1"/></g>

<!-- ===== dialog icons ===== -->
<path d="M480.5,93.8 L485.3,98.6 L494,88.6" fill="none" stroke="#fff" stroke-width="3"/>
<path d="M509.8,88.6 L520,99 M520,88.6 L509.8,99" stroke="#c9232d" stroke-width="2.8"/>
<path d="M480.5,142.3 L487.1,148.9 M487.1,142.3 L480.5,148.9" stroke="#555" stroke-width="1.1"/>
<g fill="none" stroke="#444"><circle cx="512.9" cy="125.3" r="8.2" stroke-width="1.1"/><circle cx="512.9" cy="125.3" r="6.4" stroke-width="1.1"/><path d="M512.9,119.5 V125.8 H518.5" stroke-width="1.3"/></g>
<path d="M315.8,230.8 L318,233.2 L322.3,228.3" fill="none" stroke="#fff" stroke-width="1.8"/>
<path d="M315.8,258.2 L318,260.6 L322.3,255.7" fill="none" stroke="#fff" stroke-width="1.8"/>
<g fill="none" stroke="#333"><circle cx="438.6" cy="284.6" r="7.8" stroke-width="1.2"/><path d="M434.3,288.8 L435.3,285.5 L441.8,279 L444,281.2 L437.6,287.8 Z" stroke-width="1.1" fill="#fff"/><path d="M432,289.8 H445.5" stroke="#5b7fd0" stroke-width="1"/><path d="M444,290.5 L447.3,293.8" stroke-width="1.5"/></g>
<circle cx="517.8" cy="288.2" r="6.2" fill="#a0a0a0"/>
<path d="M515.8,286.6 C515.8,284 520,284 520,286.5 C520,288 517.9,288.1 517.9,289.7" fill="none" stroke="#fff" stroke-width="1.5"/><circle cx="517.9" cy="291.7" r="0.9" fill="#fff"/>
<!-- ===== view cube ===== -->
<g fill="#9c9c9c">
  <path d="M1830,91.3 L1837.8,100.6 H1822.6 Z"/><path d="M1830,240.7 L1837.8,231.1 H1822.6 Z"/>
  <path d="M1755,166 L1765.2,158.5 V173.3 Z"/><path d="M1905,166 L1895.2,158.5 V173.3 Z"/>
  <path d="M1808,99.5 L1809.8,104.5 C1800,108 1791,113.5 1784.5,119.8 L1789,124.8 H1775.8 L1777,111.8 L1781.3,116.3 C1788.5,109 1798,103 1808,99.5 Z"/>
  <path d="M1852,99.5 L1850.2,104.5 C1860,108 1869,113.5 1875.5,119.8 L1871,124.8 H1884.2 L1883,111.8 L1878.7,116.3 C1871.5,109 1862,103 1852,99.5 Z"/>
</g>
<path d="M1811,137.6 H1849 L1858.7,147.3 V184.5 L1849,194 H1811 L1801.3,184.5 V147.3 Z" fill="#e6eaee"/>
<rect x="1807.8" y="143.1" width="44.4" height="45.4" rx="9" fill="#fff"/>
<path d="M1801.3,140 L1808,146.5 M1858.7,140 L1852,146.5 M1801.3,191.5 L1808,185.5 M1858.7,191.5 L1852,185.5" stroke="#fff" stroke-width="2.5"/>
<line x1="1799.4" y1="138" x2="1799.4" y2="196.5" stroke="#3b35c9" stroke-width="1.2"/>
<line x1="1799.4" y1="196.5" x2="1858.2" y2="196.5" stroke="#d9444a" stroke-width="1.2"/>
<g stroke="#333" stroke-width="1" stroke-linejoin="round"><path d="M1866,227 L1875,223.2 L1883.6,226.6 L1874.5,230.2 Z" fill="#f4f4f4"/><path d="M1866,227 L1874.5,230.2 V240.5 L1866,236.5 Z" fill="#bcbcbc"/><path d="M1874.5,230.2 L1883.6,226.6 V236.3 L1874.5,240.5 Z" fill="#e2e2e2"/></g>
<path d="M1891.5,229.8 H1900 L1895.7,234.3 Z" fill="#222"/>
<!-- ===== right panel icons ===== -->
<g><path d="M1896.5,452 L1903,441.5 L1907,443.8 L1902,454 Z" fill="#777"/><path d="M1899,453.5 L1908,444 L1911.5,446.8 L1905,455 Z" fill="#999"/><path d="M1901,455 L1911,447.5 L1914,451 L1906,456.5 Z" fill="#b5b5b5"/><rect x="1895" y="454.5" width="20" height="7" rx="1" fill="#e8e8e8" stroke="#777" stroke-width="1"/><rect x="1905" y="455" width="9.5" height="6" fill="#cfcfcf"/><circle cx="1898.5" cy="458" r="1.3" fill="none" stroke="#555" stroke-width="0.8"/></g>
<g stroke="#333" stroke-width="1.1" fill="#fff" stroke-linejoin="round"><path d="M1899.4,480.5 L1907,477.2 L1914.2,480.5 L1906.8,484 Z"/><path d="M1899.4,480.5 V488.3 L1906.8,492 V484 Z"/><path d="M1906.8,484 L1914.2,480.5 V488.3 L1906.8,492 Z"/></g>
<g><rect x="1895" y="473.5" width="9.5" height="8" fill="#2a66c8"/><path d="M1895,476.2 H1904.5 M1895,478.9 H1904.5 M1898.2,473.5 V481.5 M1901.4,473.5 V481.5" stroke="#fff" stroke-width="0.7"/></g>
<g stroke="#444" fill="none" stroke-width="1.1"><path d="M1899.5,513 L1905.8,510.5 L1912,513 V519.5 L1905.8,522.5 L1899.5,519.5 Z M1899.5,513 L1905.8,515.8 L1912,513 M1905.8,515.8 V522.5" fill="#ddd"/><path d="M1898.5,509 C1896.5,509 1897.5,515 1895.5,516.5 C1897.5,518 1896.5,524 1898.5,524 M1913,509 C1915,509 1914,515 1916,516.5 C1914,518 1915,524 1913,524"/></g>
<g><rect x="1895.3" y="507" width="9" height="7.5" fill="#444"/><path d="M1895.3,509.5 H1904.3 M1895.3,512 H1904.3 M1898.3,507 V514.5 M1901.3,507 V514.5" stroke="#fff" stroke-width="0.7"/></g>
<g><rect x="1895.3" y="539.5" width="9.5" height="7.5" fill="#444"/><path d="M1895.3,542 H1904.8 M1895.3,544.5 H1904.8 M1898.5,539.5 V547 M1901.7,539.5 V547" stroke="#fff" stroke-width="0.7"/><path d="M1898,542.5 C1895.3,546 1895.3,554 1898,557.5 M1912,543 C1914.7,546.5 1914.7,554 1912,557.5" fill="none" stroke="#222" stroke-width="1.7"/><text x="1899.3" y="556" font-family="Liberation Serif, serif" font-style="italic" font-weight="700" font-size="17" fill="#222" stroke="#222" stroke-width="0.4">x</text></g>
<rect x="1893.3" y="580.7" width="23.3" height="24" rx="3" fill="#dcdcdc"/>
<g><path d="M1895.8,588.8 L1914,586.8 L1915,598 L1897,601.3 Z" fill="#222"/><path d="M1904.3,584.5 h1.4 v3.5 h-1.4 z" fill="#222"/><circle cx="1905" cy="584" r="1.3" fill="#222"/><path d="M1899.5,582.3 h1.2 v2.5 h-1.2z M1901.8,582.3 h1.2 v2.5 h-1.2z M1907.5,582 h1.2 v2.5 h-1.2z M1909.8,582 h1.2 v2.5 h-1.2z" fill="#2a66c8"/><circle cx="1901.7" cy="594.3" r="2.9" fill="#fff"/><circle cx="1909.5" cy="593.3" r="2.9" fill="#fff"/><circle cx="1902" cy="594.3" r="1.5" fill="#2a66c8"/><circle cx="1909.8" cy="593.3" r="1.5" fill="#2a66c8"/></g>
<rect x="1893.3" y="614" width="23.3" height="24" rx="2" fill="#dcdcdc"/><rect x="1894.3" y="615" width="21.3" height="22" fill="#5cb85c"/>
<path d="M1897.3,619.5 C1900,618.5 1903,619 1904.5,620.5 V633.5 C1903,632.3 1900,632 1897.3,632.8 Z M1912.7,619.5 C1910,618.5 1907,619 1905.5,620.5 V633.5 C1907,632.3 1910,632 1912.7,632.8 Z" fill="#fff"/>
<rect x="1893.3" y="647" width="23.3" height="24" rx="2" fill="#dcdcdc"/><rect x="1894.8" y="648.5" width="20.3" height="21" fill="#1456c8" stroke="#111" stroke-width="1.3"/>
<path d="M1897.5,652.5 C1900,651.5 1903,652 1904.5,653.5 V666 C1903,664.8 1900,664.5 1897.5,665.3 Z M1912.5,652.5 C1910,651.5 1907,652 1905.5,653.5 V666 C1907,664.8 1910,664.5 1912.5,665.3 Z" fill="#fff"/>
<!-- ===== bottom bar icons ===== -->
<rect x="11" y="1059.3" width="18" height="7.4" fill="#2b2b2b"/><circle cx="21.5" cy="1066.9" r="5.1" fill="#f8f8f8"/><circle cx="21.5" cy="1066.9" r="3.6" fill="#f8f8f8" stroke="#2b2b2b" stroke-width="1.6"/><path d="M24.3,1069.8 L28.3,1073.2" stroke="#2b2b2b" stroke-width="2.1"/>
<path d="M49.3,1064.5 H63.7 M56.5,1057.3 V1071.7" stroke="#555" stroke-width="2.6"/>
<path d="M82.8,1062.3 L92,1053.5 L95.5,1056.8 V1054.5 H98.5 V1059.7 L101.2,1062.3 H98.8 V1070.8 H94 V1065 H90 V1070.8 H85.2 V1062.3 Z" fill="#555"/>
<path d="M126.3,1068.2 V1056.7 Q126.3,1055.7 127.3,1055.7 H132.5 L134.3,1057.7 H142.2 Q143.2,1057.7 143.2,1058.7 V1068.2 Z" fill="#fff" stroke="#333" stroke-width="1.3"/>
<g stroke="#333" stroke-width="1.1" stroke-linejoin="round"><path d="M246.8,1056.5 Q246.8,1054.5 248.8,1054.5 H259 L263.5,1058.5 V1071.5 H251 L246.8,1067.5 Z" fill="#fff"/><rect x="249" y="1056.3" width="9.5" height="10" fill="#8c8c8c"/><path d="M246.8,1067.5 L249,1066.3 M258.5,1066.3 L263.5,1071.5" fill="none"/></g>
<g stroke="#333" stroke-width="1.1" stroke-linejoin="round" fill="#fff"><path d="M449.5,1060 L452,1058.5 H456.5 V1069.5 L454,1071.5 H449.5 Z M449.5,1060 H454 V1071.5 M454,1060 L456.5,1058.5"/><path d="M457.5,1056.5 L460,1054.5 H465.5 V1069.5 L463,1071.5 H457.5 Z M457.5,1056.5 H463 V1071.5 M463,1056.5 L465.5,1054.5"/></g>
<g stroke="#2b2b2b" fill="#fff" stroke-width="1.2" stroke-linejoin="round">
<path d="M1822.2,1036.5 H1834 V1041.7 H1822.2 Z"/>
<path d="M1827.2,1033 V1036.3 C1827.2,1038 1829.5,1039.3 1832.6,1039.3 C1835.7,1039.3 1838,1038 1838,1036.3 V1033"/>
<ellipse cx="1832.6" cy="1032.9" rx="5.4" ry="2.7"/>
<ellipse cx="1832.6" cy="1032.9" rx="2.9" ry="1.2" stroke-width="1"/>
<path d="M1824.5,1040 v1.6 M1827,1040 v1.6 M1829.5,1040 v1.6 M1832,1040 v1.6" stroke-width="0.7" fill="none"/>
<path d="M1834,1036.5 C1836.5,1038.5 1838,1037.5 1838,1036.3" fill="none" stroke-width="1"/>
</g>
<g stroke="#2b2b2b" stroke-linejoin="round">
<path d="M1855.8,1042.3 V1040 A9.4,9.4 0 0 1 1874.6,1040 V1042.3 Z" fill="#fff" stroke-width="1.3"/>
<path d="M1859.4,1040 A5.8,5.8 0 0 1 1871,1040 H1867.5 A2.3,2.3 0 0 0 1862.9,1040 Z" fill="#bbb" stroke-width="1.1"/>
<path d="M1865.2,1031.3 v1.3 M1860.5,1032.7 l0.7,1.1 M1869.9,1032.7 l-0.7,1.1 M1857.3,1036 l1.1,0.7 M1873.1,1036 l-1.1,0.7" stroke-width="0.6" fill="none"/>
</g>
<g stroke="#2b2b2b" fill="none">
<path d="M1894.8,1029.3 H1905.2" stroke-width="1.2"/>
<path d="M1900,1029.3 V1041.2" stroke="#777" stroke-width="1.7"/>
<path d="M1895.5,1029.5 L1893.8,1037 M1895.5,1029.5 L1897,1037 M1904.5,1029.5 L1903,1037 M1904.5,1029.5 L1906.2,1037" stroke-width="0.8"/>
<path d="M1893.3,1037.8 H1897.5 M1902.6,1037.8 H1906.8" stroke-width="1.6"/>
<path d="M1893.3,1042 H1906.8" stroke-width="1.9"/>
</g>
</svg>
<!-- text -->
<div class="a" style="left:0;top:0;width:1920px;height:1080px;will-change:transform;">
<span class="t" style="left:31px;top:11px;font-size:16px;line-height:16px;font-weight:400;font-style:normal;color:#787878;transform-origin:0 13px;transform:scale(1.1077,1);">onshape</span>
<span class="t" style="left:141.5px;top:11px;font-size:22.5px;line-height:22.5px;font-weight:700;font-style:normal;color:#333;transform-origin:0 18px;transform:scale(0.9430,1.045);">1B - Practice Exercise Solutions</span>
<span class="t" style="left:475.8px;top:16px;font-size:15px;line-height:15px;font-weight:400;font-style:normal;color:#9a9a9a;transform-origin:0 13px;transform:scale(1.0160,1);">FRCDesignLib Rework</span>
<span class="t" style="left:692.8px;top:14px;font-size:15px;line-height:15px;font-weight:400;font-style:normal;color:#9a9a9a;transform-origin:0 13px;transform:scale(0.9880,1);">Stage 1</span>
<span class="t" style="left:876px;top:13px;font-size:15.5px;line-height:15.5px;font-weight:400;font-style:normal;color:#444;transform-origin:0 13px;transform:scale(0.8348,1);">215</span>
<span class="t" style="left:937.6px;top:13px;font-size:15.5px;line-height:15.5px;font-weight:400;font-style:normal;color:#444;transform-origin:0 13px;transform:scale(0.8642,1);">5014</span>
<span class="t" style="left:1008px;top:13px;font-size:15.5px;line-height:15.5px;font-weight:400;font-style:normal;color:#444;transform-origin:0 13px;transform:scale(0.7884,1);">4</span>
<span class="t" style="left:1685px;top:12px;font-size:15px;line-height:15px;font-weight:700;font-style:normal;color:#fff;transform-origin:0 13px;transform:scale(0.8513,1);">Share</span>
<span class="t" style="left:1819px;top:13px;font-size:15px;line-height:15px;font-weight:400;font-style:normal;color:#333;transform-origin:0 13px;transform:scale(0.9092,1);">Andrew Card</span>
<span class="t" style="left:1559.5px;top:9px;font-size:11px;line-height:11px;font-weight:700;font-style:normal;color:#fff;transform-origin:0 9px;transform:scale(0.9166,1);">9+</span>
<span class="t" style="left:1488px;top:50px;font-size:15px;line-height:15px;font-weight:400;font-style:normal;color:#333;transform-origin:0 13px;transform:scale(0.8969,1);">Search tools...</span>
<span class="t" style="left:86px;top:93px;font-size:14px;line-height:14px;font-weight:400;font-style:italic;color:#888;transform-origin:0 12px;transform:scale(0.9085,1);">Filter by name or type</span>
<span class="t" style="left:44.7px;top:123px;font-size:14.5px;line-height:14.5px;font-weight:400;font-style:normal;color:#222;transform-origin:0 12px;transform:scale(0.8992,1);-webkit-text-stroke:0.35px #222;">Features (11)</span>
<span class="t" style="left:63px;top:150px;font-size:14.5px;line-height:14.5px;font-weight:400;font-style:normal;color:#333;transform-origin:0 12px;transform:scale(0.9237,1);">Default geometry</span>
<span class="t" style="left:85px;top:176px;font-size:14.5px;line-height:14.5px;font-weight:400;font-style:normal;color:#333;transform-origin:0 12px;transform:scale(0.9047,1);">Origin</span>
<span class="t" style="left:85px;top:202px;font-size:14.5px;line-height:14.5px;font-weight:400;font-style:normal;color:#333;transform-origin:0 12px;transform:scale(0.9405,1);">Top</span>
<span class="t" style="left:85px;top:228px;font-size:14.5px;line-height:14.5px;font-weight:400;font-style:normal;color:#333;transform-origin:0 12px;transform:scale(0.9455,1);">Front</span>
<span class="t" style="left:85px;top:254px;font-size:14.5px;line-height:14.5px;font-weight:400;font-style:normal;color:#333;transform-origin:0 12px;transform:scale(0.9156,1);">Right</span>
<span class="t" style="left:66px;top:280px;font-size:14.5px;line-height:14.5px;font-weight:400;font-style:normal;color:#333;transform-origin:0 12px;transform:scale(0.9186,1);">Layout</span>
<span class="t" style="left:66px;top:306px;font-size:14.5px;line-height:14.5px;font-weight:700;font-style:normal;color:#222;transform-origin:0 12px;transform:scale(0.9119,1);">Motor Plate</span>
<span class="t" style="left:67px;top:332px;font-size:14.5px;line-height:14.5px;font-weight:400;font-style:italic;color:#9a9a9a;transform-origin:0 12px;transform:scale(0.9170,1);">Motor Plate</span>
<span class="t" style="left:67px;top:358px;font-size:14.5px;line-height:14.5px;font-weight:400;font-style:italic;color:#9a9a9a;transform-origin:0 12px;transform:scale(0.8807,1);">Gearbox Spacer</span>
<span class="t" style="left:67px;top:384px;font-size:14.5px;line-height:14.5px;font-weight:400;font-style:italic;color:#9a9a9a;transform-origin:0 12px;transform:scale(0.8999,1);">Outer Plate</span>
<span class="t" style="left:67px;top:410px;font-size:14.5px;line-height:14.5px;font-weight:400;font-style:italic;color:#9a9a9a;transform-origin:0 12px;transform:scale(0.8999,1);">Outer Plate</span>
<span class="t" style="left:67px;top:436px;font-size:14.5px;line-height:14.5px;font-weight:400;font-style:italic;color:#9a9a9a;transform-origin:0 12px;transform:scale(0.9088,1);">Output Shaft</span>
<span class="t" style="left:63px;top:714px;font-size:14.5px;line-height:14.5px;font-weight:400;font-style:normal;color:#333;transform-origin:0 12px;transform:scale(0.8994,1);">Parts (0)</span>
<span class="t" style="left:315.5px;top:86px;font-size:14.5px;line-height:14.5px;font-weight:700;font-style:normal;color:#333;transform-origin:0 12px;transform:scale(0.8587,1);">Motor Plate</span>
<span class="t" style="left:318.2px;top:119px;font-size:11.3px;line-height:11.3px;font-weight:400;font-style:normal;color:#555;transform-origin:0 9px;transform:scale(0.8848,1);">Sketch plane</span>
<span class="t" style="left:319.5px;top:138px;font-size:14px;line-height:14px;font-weight:400;font-style:normal;color:#555;transform-origin:0 12px;transform:scale(0.9417,1);">Front plane</span>
<span class="t" style="left:329.3px;top:169px;font-size:14px;line-height:14px;font-weight:400;font-style:normal;color:#555;transform-origin:0 12px;transform:scale(0.9543,1);">Disable imprinting</span>
<span class="t" style="left:329.3px;top:197px;font-size:14px;line-height:14px;font-weight:400;font-style:normal;color:#555;transform-origin:0 12px;transform:scale(0.9446,1);">Show constraints</span>
<span class="t" style="left:329.3px;top:224px;font-size:14px;line-height:14px;font-weight:400;font-style:normal;color:#555;transform-origin:0 12px;transform:scale(0.9215,1);">Show expressions</span>
<span class="t" style="left:329.3px;top:251px;font-size:14px;line-height:14px;font-weight:400;font-style:normal;color:#555;transform-origin:0 12px;transform:scale(0.9368,1);">Show errors</span>
<span class="t" style="left:465.5px;top:278px;font-size:14px;line-height:14px;font-weight:400;font-style:normal;color:#333;transform-origin:0 12px;transform:scale(0.8795,1);">Final</span>
<span class="t" style="left:1815.7px;top:158px;font-size:14px;line-height:14px;font-weight:400;font-style:normal;color:#222;transform-origin:0 12px;transform:scale(0.8750,1);">Front</span>
<span class="t" style="left:150.5px;top:1055px;font-size:15px;line-height:15px;font-weight:400;font-style:normal;color:#666;transform-origin:0 13px;transform:scale(0.8853,1);">Exercise 1</span>
<span class="t" style="left:268.3px;top:1056px;font-size:15px;line-height:15px;font-weight:400;font-style:normal;color:#666;transform-origin:0 13px;transform:scale(0.9177,1);">Exercise 1 Assembly</span>
<span class="t" style="left:470.5px;top:1056px;font-size:15px;line-height:15px;font-weight:400;font-style:normal;color:#333;transform-origin:0 13px;transform:scale(0.9036,1);">Exercise 1 Part Studio</span>
<span class="t" style="left:1581px;top:54px;font-size:11.5px;line-height:11.5px;font-weight:400;font-style:normal;color:#444;transform-origin:0 9px;transform:scale(0.9776,1);">alt/</span>
<span class="t" style="left:1617px;top:54px;font-size:11.5px;line-height:11.5px;font-weight:400;font-style:normal;color:#444;transform-origin:0 9px;transform:scale(1.0435,1);">c</span>
<span class="t" style="left:664.5px;top:188px;font-size:19px;line-height:19px;font-weight:400;font-style:normal;color:#2f60ad;transform-origin:0 16px;transform:scale(1.0483,1);-webkit-text-stroke:0.25px #2f60ad;">Front</span>
<span class="t" style="left:529px;top:274px;font-size:19px;line-height:19px;font-weight:400;font-style:normal;color:#9ccaf0;transform-origin:0 16px;transform:scale(1.0378,1);-webkit-text-stroke:0.25px #9ccaf0;">r Plate</span>
<span class="t" style="left:966px;top:91px;font-size:17px;line-height:17px;font-weight:400;font-style:normal;color:#222;transform-origin:0 14px;transform:scale(0.9717,1);">Ø1.25</span>
<span class="t" style="left:884px;top:151px;font-size:17px;line-height:17px;font-weight:400;font-style:normal;color:#222;transform-origin:0 14px;transform:scale(0.9256,1);">Ø2</span>
<span class="t" style="left:796px;top:233px;font-size:17px;line-height:17px;font-weight:400;font-style:normal;color:#222;transform-origin:0 14px;transform:scale(1.0042,1);">Ø0.201</span>
<span class="t" style="left:686px;top:460px;font-size:17px;line-height:17px;font-weight:400;font-style:normal;color:#222;transform-origin:0 14px;transform:scale(0.9683,1);">Ø1.125</span>
<span class="t" style="left:1796.3px;top:121px;font-size:13px;line-height:13px;font-weight:400;font-style:normal;color:#5b4fd6;transform-origin:0 11px;transform:scale(0.8173,1);-webkit-text-stroke:0.3px #5b4fd6;">Z</span>
<span class="t" style="left:1865.3px;top:190px;font-size:13px;line-height:13px;font-weight:400;font-style:normal;color:#d9444a;transform-origin:0 11px;transform:scale(0.7726,1);-webkit-text-stroke:0.3px #d9444a;">X</span>
</div>
</body>
</html>
